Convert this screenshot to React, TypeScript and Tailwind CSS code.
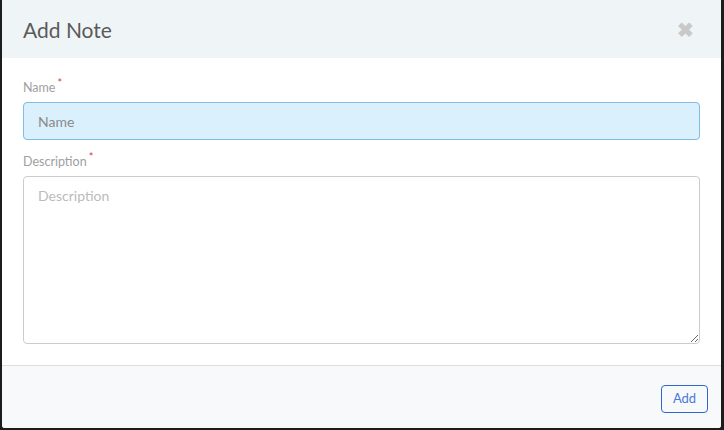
export default function App() {
  return (
    <div className="h-[430px] w-[724px] bg-[#1c1c1c] pb-[2px] pl-[2px] pr-[3px] font-['Lato',sans-serif]">
      <div className="flex h-full flex-col overflow-hidden rounded-b-[3px] bg-white">
        {/* header */}
        <div className="flex h-[58px] shrink-0 items-center justify-between bg-[#eff4f7] pl-[21px] pr-[27px]">
          <h2 className="text-[21px] leading-none text-[#5a5a5a]">Add Note</h2>
          <button className="text-[20px] font-bold leading-none text-[#c9c9c9]" aria-label="Close">
            ✖
          </button>
        </div>

        {/* body */}
        <div className="flex flex-col px-[21px] pb-[21px] pt-[22px]">
          <label className="mb-[6px] text-[12.5px] leading-[16px] text-[#a0a0a0]">
            Name<sup className="ml-[2px] text-[11px] text-[#e03a3a]">*</sup>
          </label>
          <input
            placeholder="Name"
            className="h-[38px] rounded-[4px] border border-[#80bde3] bg-[#daf0fc] px-[14px] text-[14px] text-[#555] outline-none placeholder:text-[#8a8a8a]"
          />
          <label className="mb-[6px] mt-[14px] text-[12.5px] leading-[16px] text-[#a0a0a0]">
            Description<sup className="ml-[2px] text-[11px] text-[#e03a3a]">*</sup>
          </label>
          <textarea
            placeholder="Description"
            className="h-[168px] rounded-[4px] border border-[#cccccc] bg-white px-[14px] py-[8px] text-[14px] text-[#555] outline-none placeholder:text-[#bbbbbb]"
          />
        </div>

        {/* footer */}
        <div className="flex flex-1 items-start justify-end border-t border-[#dddddd] bg-[#f8f9fb] pr-[13px] pt-[19px]">
          <button className="h-[28px] w-[47px] rounded-[4px] border border-[#2f66d0] text-[13px] text-[#4a78da]">
            Add
          </button>
        </div>
      </div>
    </div>
  );
}
